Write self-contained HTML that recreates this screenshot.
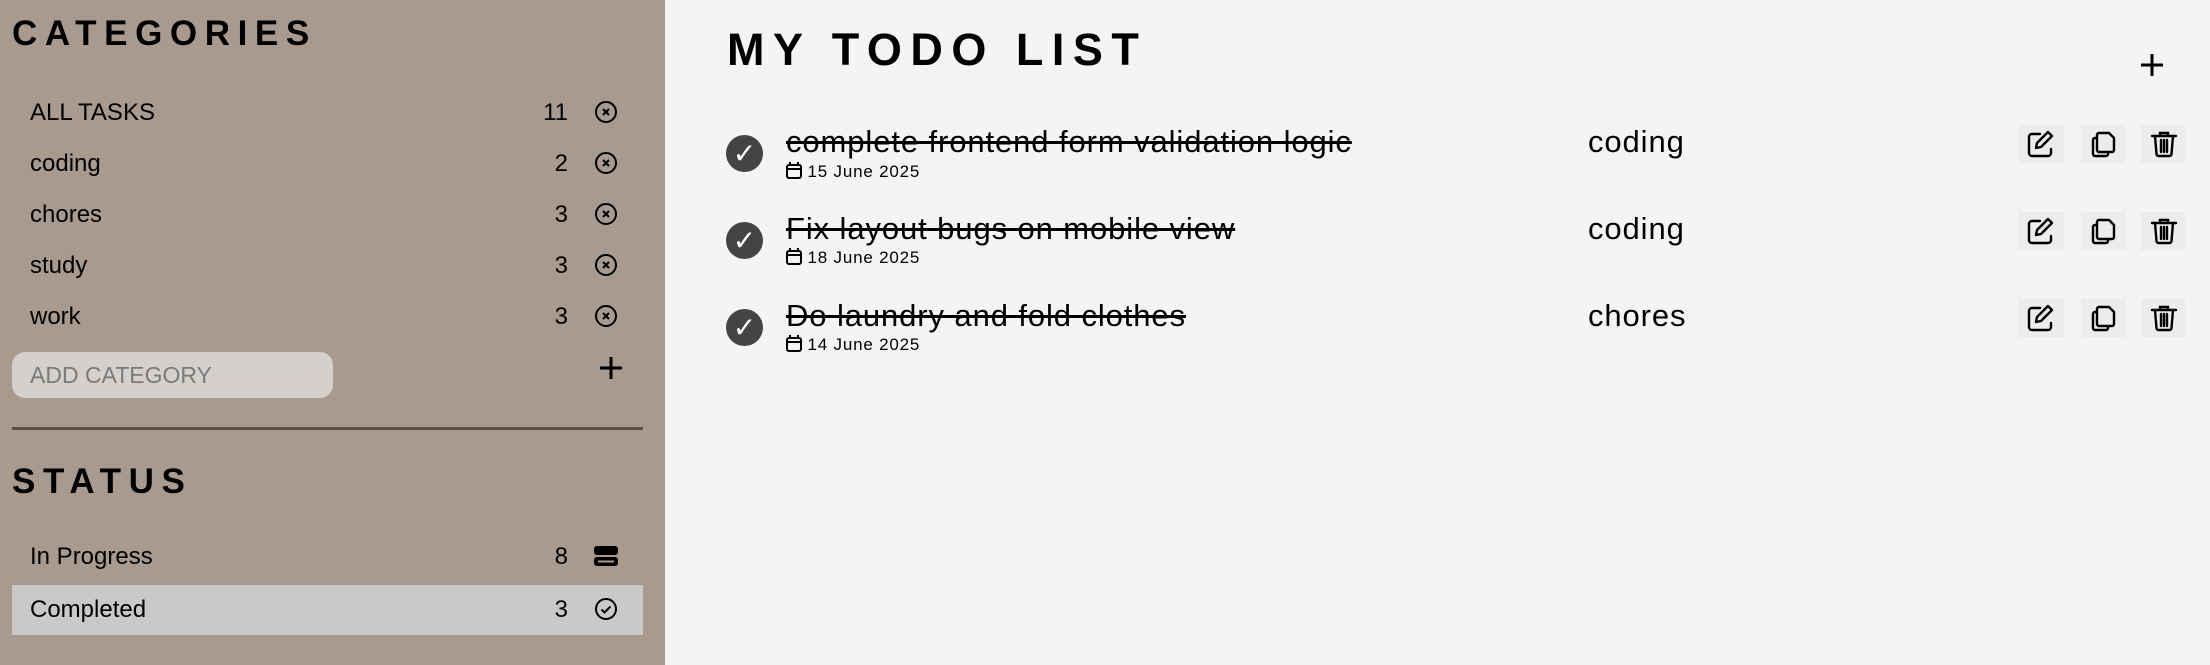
<!DOCTYPE html>
<html><head><meta charset="utf-8"><style>
*{margin:0;padding:0;box-sizing:border-box}
body{width:2210px;height:665px;background:#f4f4f4;font-family:"Liberation Sans",sans-serif;color:#000;position:relative;overflow:hidden}
.side{position:absolute;left:0;top:0;width:665px;height:665px;background:#a89a8e}
.abs{position:absolute;white-space:nowrap}
.h{font-weight:bold;font-size:35px;letter-spacing:7.6px}
.row{position:absolute;left:12px;width:631px;height:50px}
.row .t{position:absolute;left:18px;top:11px;font-size:24px}
.row .n{position:absolute;left:530px;top:11px;font-size:24px;width:26px;text-align:right}
.row svg{position:absolute;left:582px;top:12px}
.task .c{position:absolute;left:726px;width:37px;height:37px;border-radius:50%;background:#444;color:#fff;font-size:28px;text-align:center;line-height:37px}
.task .x{position:absolute;left:786px;font-size:31px;letter-spacing:0.9px;text-decoration:line-through;text-decoration-thickness:3px;white-space:nowrap}
.task .d{position:absolute;left:786px;font-size:17px;letter-spacing:0.8px;white-space:nowrap}
.task .g{position:absolute;left:1588px;font-size:31px;letter-spacing:0.9px}
.btn{position:absolute;width:46px;height:38px;background:#ececec}
.btn svg{position:absolute;left:8px;top:4px}
</style></head><body>
<div class="side">
<div class="abs h" style="left:12px;top:14px">CATEGORIES</div>
<div class="row" style="top:88px"><span class="t">ALL TASKS</span><span class="n">11</span><svg width="24" height="24" viewBox="0 0 24 24" fill="none" stroke="#000" stroke-width="2"><circle cx="12" cy="12" r="10"/><path d="M9 9l6 6M15 9l-6 6"/></svg></div>
<div class="row" style="top:139px"><span class="t">coding</span><span class="n">2</span><svg width="24" height="24" viewBox="0 0 24 24" fill="none" stroke="#000" stroke-width="2"><circle cx="12" cy="12" r="10"/><path d="M9 9l6 6M15 9l-6 6"/></svg></div>
<div class="row" style="top:190px"><span class="t">chores</span><span class="n">3</span><svg width="24" height="24" viewBox="0 0 24 24" fill="none" stroke="#000" stroke-width="2"><circle cx="12" cy="12" r="10"/><path d="M9 9l6 6M15 9l-6 6"/></svg></div>
<div class="row" style="top:241px"><span class="t">study</span><span class="n">3</span><svg width="24" height="24" viewBox="0 0 24 24" fill="none" stroke="#000" stroke-width="2"><circle cx="12" cy="12" r="10"/><path d="M9 9l6 6M15 9l-6 6"/></svg></div>
<div class="row" style="top:292px"><span class="t">work</span><span class="n">3</span><svg width="24" height="24" viewBox="0 0 24 24" fill="none" stroke="#000" stroke-width="2"><circle cx="12" cy="12" r="10"/><path d="M9 9l6 6M15 9l-6 6"/></svg></div>
<div class="abs" style="left:12px;top:352px;width:321px;height:46px;border-radius:13px;background:#d3d0cd;font-size:23px;color:#7a7a7a;padding:10px 0 0 18px">ADD CATEGORY</div>
<svg class="abs" style="left:598px;top:355px" width="26" height="26" viewBox="0 0 26 26" stroke="#000" stroke-width="3"><path d="M13 2v22M2 13h22"/></svg>
<div class="abs" style="left:12px;top:427px;width:631px;height:3px;background:#5a5048"></div>
<div class="abs h" style="left:12px;top:462px">STATUS</div>
<div class="row" style="top:532px"><span class="t">In Progress</span><span class="n">8</span><svg width="24" height="24" viewBox="0 0 24 24"><rect x="0" y="2" width="24" height="9" rx="3"/><rect x="0" y="13" width="24" height="9" rx="3"/><path d="M4 17.5h16" stroke="#a89a8e" stroke-width="2"/></svg></div>
<div class="row" style="top:585px;height:50px;background:#c9c9c9"><span class="t">Completed</span><span class="n">3</span><svg width="24" height="24" viewBox="0 0 24 24" fill="none" stroke="#000" stroke-width="2"><circle cx="12" cy="12" r="10"/><path d="M7.5 12.5l3 3 6-6"/></svg></div>
</div>
<div class="abs" style="left:727px;top:24px;font-weight:bold;font-size:45px;letter-spacing:8.5px">MY TODO LIST</div>
<svg class="abs" style="left:2140px;top:53px" width="24" height="24" viewBox="0 0 24 24" stroke="#000" stroke-width="3"><path d="M12 1v22M1 12h22"/></svg>

<div class="task">
<div class="c" style="top:135px">✓</div>
<div class="x" style="top:124px">complete frontend form validation logic</div>
<div class="d" style="top:162px"><svg width="16" height="17" viewBox="0 0 16 17" fill="none" stroke="#000" stroke-width="2" style="vertical-align:-2px"><rect x="1" y="3" width="14" height="13" rx="2"/><path d="M1 7h14M4 0v4M12 0v4"/></svg> 15 June 2025</div>
<div class="g" style="top:124px">coding</div>
</div>
<div class="task">
<div class="c" style="top:222px">✓</div>
<div class="x" style="top:211px">Fix layout bugs on mobile view</div>
<div class="d" style="top:248px"><svg width="16" height="17" viewBox="0 0 16 17" fill="none" stroke="#000" stroke-width="2" style="vertical-align:-2px"><rect x="1" y="3" width="14" height="13" rx="2"/><path d="M1 7h14M4 0v4M12 0v4"/></svg> 18 June 2025</div>
<div class="g" style="top:211px">coding</div>
</div>
<div class="task">
<div class="c" style="top:309px">✓</div>
<div class="x" style="top:298px">Do laundry and fold clothes</div>
<div class="d" style="top:335px"><svg width="16" height="17" viewBox="0 0 16 17" fill="none" stroke="#000" stroke-width="2" style="vertical-align:-2px"><rect x="1" y="3" width="14" height="13" rx="2"/><path d="M1 7h14M4 0v4M12 0v4"/></svg> 14 June 2025</div>
<div class="g" style="top:298px">chores</div>
</div>

<div id="btns"></div>
<script>
var ys=[125,212,299],h='';
var ed='<svg width="30" height="30" viewBox="0 0 30 30" fill="none" stroke="#000" stroke-width="2.4" stroke-linecap="round" stroke-linejoin="round"><path d="M14 5H6a3 3 0 0 0-3 3v16a3 3 0 0 0 3 3h16a3 3 0 0 0 3-3v-4"/><path d="M22 3l4 4-11 11-5 1 1-5z"/></svg>';
var cp='<svg width="30" height="30" viewBox="0 0 30 30" fill="none" stroke="#000" stroke-width="2.4" stroke-linejoin="round"><path d="M10 4h10l5 5v12a2 2 0 0 1-2 2H10a2 2 0 0 1-2-2V6a2 2 0 0 1 2-2z"/><path d="M8 9H6a2 2 0 0 0-2 2v14a2 2 0 0 0 2 2h11a2 2 0 0 0 2-2v-2"/></svg>';
var tr='<svg width="30" height="30" viewBox="0 0 30 30" fill="none" stroke="#000" stroke-width="2.4" stroke-linecap="round"><path d="M3 7h24M11 7V4h8v3M6 7l1.5 18a2 2 0 0 0 2 2h11a2 2 0 0 0 2-2L24 7M12 11v12M15 11v12M18 11v12"/></svg>';
ys.forEach(function(y){h+='<div class="btn" style="left:2018px;top:'+y+'px">'+ed+'</div><div class="btn" style="left:2081px;top:'+y+'px;width:45px">'+cp+'</div><div class="btn" style="left:2141px;top:'+y+'px;width:44px">'+tr+'</div>';});
document.getElementById('btns').innerHTML=h;
</script>
</body></html>
